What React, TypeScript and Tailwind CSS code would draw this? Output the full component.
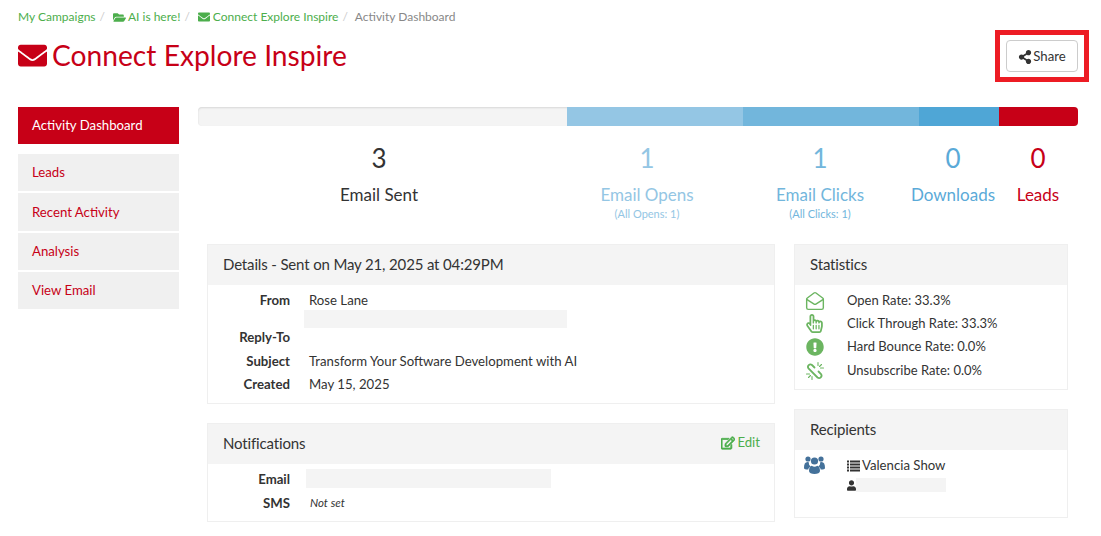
import React from "react";
import {
  FaEnvelope,
  FaExclamationCircle,
  FaFolderOpen,
  FaRegEdit,
  FaRegHandPointer,
  FaShareAlt,
  FaUser,
} from "react-icons/fa";
import { MailOpen } from "lucide-react";

const sideLinks = [
  { label: "Leads", h: "h-[37px]" },
  { label: "Recent Activity", h: "h-[38px] pt-px" },
  { label: "Analysis", h: "h-[37px]" },
  { label: "View Email", h: "h-[37px]" },
];

const BrokenLinkIcon = () => (
  <svg width="20" height="20" viewBox="0 0 20 20" fill="none" stroke="currentColor" strokeWidth="1.800" strokeLinecap="round">
    <path d="M9.500 6.500 7 4a2.500 2.500 0 0 0-3.500 3.500L12.500 16.500a2.500 2.500 0 0 0 3.500-3.500L13.500 10.500" />
    <path d="M13 1.500v3M16.500 3.500l-2 2M18.500 7h-3" strokeWidth="1.100" />
    <path d="M7 18.500v-3M3.500 16.500l2-2M1.500 13h3" strokeWidth="1.100" />
  </svg>
);

const stats = [
  { icon: <MailOpen size={20} strokeWidth={1.7} />, text: "Open Rate: 33.3%" },
  { icon: <FaRegHandPointer size={19} />, text: "Click Through Rate: 33.3%" },
  { icon: <FaExclamationCircle size={18} />, text: "Hard Bounce Rate: 0.0%" },
  { icon: <BrokenLinkIcon />, text: "Unsubscribe Rate: 0.0%" },
];

const UsersIcon = () => (
  <svg width="21" height="19" viewBox="0 0 21 19" fill="currentColor">
    <circle cx="4" cy="4" r="2.600" />
    <circle cx="17" cy="4" r="2.600" />
    <circle cx="10.500" cy="6" r="3.600" />
    <path d="M0 13c0-4 1-6 3.600-6 .6 0 1 .3 1.400.6-.4 1.600.3 3 1.600 3.800C5 12.300 4.400 13.500 4.300 14.500 1.500 14.500 0 14 0 13z" />
    <path d="M21 13c0-4-1-6-3.600-6-.6 0-1 .3-1.400.6.4 1.600-.3 3-1.600 3.800 1.600.9 2.200 2.100 2.300 3.100 2.800 0 4.300-.5 4.300-1.500z" />
    <path d="M5 16c0-3 1-5 2.800-5.200 1.500 1.200 3.900 1.200 5.400 0C15 11 16 13 16 16c0 2-2.500 3-5.500 3S5 18 5 16z" />
  </svg>
);

const ListIcon = () => (
  <svg width="13" height="12" viewBox="0 0 13 12" fill="currentColor">
    <rect x="0" y="0.500" width="2" height="2" />
    <rect x="0" y="3.500" width="2" height="2" />
    <rect x="0" y="6.500" width="2" height="2" />
    <rect x="0" y="9.500" width="2" height="2" />
    <rect x="3" y="0.500" width="10" height="2" />
    <rect x="3" y="3.500" width="10" height="2" />
    <rect x="3" y="6.500" width="10" height="2" />
    <rect x="3" y="9.500" width="10" height="2" />
  </svg>
);

const Counter = ({
  value,
  label,
  sub,
  color,
  width,
}: {
  value: string;
  label: string;
  sub?: string;
  color: string;
  width: string;
}) => (
  <div className={`${width} ${color} shrink-0 text-center`}>
    <div className="text-[26px] leading-[30px]">{value}</div>
    <div className="mt-[11px] text-[17px] leading-[21px]">{label}</div>
    {sub && <div className="mt-px text-[11px] leading-[16px]">{sub}</div>}
  </div>
);

const PanelHead = ({ title, children }: { title: string; children?: React.ReactNode }) => (
  <div className="flex h-[40px] items-center justify-between bg-[#f4f4f4] px-[15px] pb-[2px] text-[15px] tracking-[-0.15px] text-[#333]">
    <span>{title}</span>
    {children}
  </div>
);

const Row = ({ label, children }: { label: string; children?: React.ReactNode }) => (
  <div className="flex">
    <div className="w-[82px] shrink-0 text-right font-bold text-[#333]">{label}</div>
    <div className="ml-[18px] min-w-0 flex-1">{children}</div>
  </div>
);

const Slash = () => <span className="ml-[4px] mr-[8px] text-[#ccc]">/</span>;

export default function App() {
  return (
    <div className="h-[536px] w-[1101px] overflow-hidden bg-white px-[18px] font-['Lato',sans-serif] text-[13.200px] text-[#333]">
      {/* Breadcrumb */}
      <div className="flex h-[34px] items-center text-[12px] text-[#4cae4c]">
        <span>My Campaigns</span>
        <Slash />
        <FaFolderOpen className="mr-[2px] text-[13px]" />
        <span>AI is here!</span>
        <Slash />
        <FaEnvelope className="mr-[3px] text-[12px]" />
        <span>Connect Explore Inspire</span>
        <Slash />
        <span className="-ml-px text-[#888]">Activity Dashboard</span>
      </div>

      {/* Title */}
      <div className="relative flex h-[73px] items-start justify-between">
        <h1 className="mt-[2px] flex items-center text-[28.200px] leading-[38px] text-[#c70017]">
          <FaEnvelope className="mr-[5px] text-[29px]" />
          Connect Explore Inspire
        </h1>
        <div className="absolute right-[-6px] top-[-4px] flex h-[52px] w-[94px] items-center justify-center border-[5px] border-[#ed1c24]">
          <button className="flex h-[32px] w-[72px] items-center justify-center rounded-[4px] border border-[#ccc] bg-white pt-[2px] text-[#333]">
            <FaShareAlt className="mr-px text-[14px]" />
            Share
          </button>
        </div>
      </div>

      <div className="flex">
        {/* Sidebar */}
        <div className="w-[161px] shrink-0">
          <div className="mb-[10px] flex h-[37px] items-center bg-[#c70017] px-[14px] text-white">Activity Dashboard</div>
          <div className="flex flex-col gap-[2px]">
            {sideLinks.map((link) => (
              <div key={link.label} className={`flex ${link.h} items-center bg-[#f0f0f0] px-[14px] text-[#c70017]`}>
                {link.label}
              </div>
            ))}
          </div>
        </div>

        {/* Main */}
        <div className="ml-[19px] w-[880px] shrink-0">
          <div className="flex h-[19px] w-[880px] overflow-hidden rounded-[4px] bg-[#f4f4f4] shadow-[inset_0_1px_2px_rgba(0,0,0,0.12)]">
            <div className="w-[369px]" />
            <div className="w-[176px] bg-[#94c6e4]" />
            <div className="w-[176px] bg-[#72b6dc]" />
            <div className="w-[80px] bg-[#4fa6d6]" />
            <div className="w-[79px] bg-[#c70017]" />
          </div>

          <div className="mt-[17px] flex h-[101px]">
            <Counter value="3" label="Email Sent" color="text-[#333]" width="w-[362px]" />
            <Counter value="1" label="Email Opens" sub="(All Opens: 1)" color="text-[#94c6e4]" width="w-[174px]" />
            <Counter value="1" label="Email Clicks" sub="(All Clicks: 1)" color="text-[#72b6dc]" width="w-[172px]" />
            <Counter value="0" label="Downloads" color="text-[#5aaad8]" width="w-[94px]" />
            <Counter value="0" label="Leads" color="text-[#c70017]" width="w-[76px]" />
          </div>

          <div className="ml-[9px] flex gap-[19px]">
            <div className="w-[568px] shrink-0">
              <div className="h-[160px] border border-[#efefef]">
                <PanelHead title="Details - Sent on May 21, 2025 at 04:29PM" />
                <div className="flex flex-col pt-[5px] leading-[20px]">
                  <Row label="From">
                    <div className="ml-[1px]">Rose Lane</div>
                    <div className="-ml-[4px] h-[18px] w-[263px] bg-[#f4f4f4]" />
                  </Row>
                  <div className="-mt-px">
                    <Row label="Reply-To" />
                  </div>
                  <div className="mt-[4px]">
                    <Row label="Subject">
                      <div className="ml-[1px]">Transform Your Software Development with AI</div>
                    </Row>
                  </div>
                  <div className="mt-[3px]">
                    <Row label="Created">
                      <div className="ml-[1px]">May 15, 2025</div>
                    </Row>
                  </div>
                </div>
              </div>

              <div className="mt-[19px] h-[99px] border border-[#efefef]">
                <PanelHead title="Notifications">
                  <span className="-mr-px flex items-center text-[13.200px] tracking-normal text-[#4cae4c]">
                    <FaRegEdit className="mr-[2px] text-[14px]" stroke="currentColor" strokeWidth={30} />
                    Edit
                  </span>
                </PanelHead>
                <div className="flex flex-col pt-[5px] leading-[20px]">
                  <Row label="Email">
                    <div className="-ml-[2px] h-[19px] w-[245px] bg-[#f4f4f4]" />
                  </Row>
                  <div className="mt-[4px]">
                    <Row label="SMS">
                      <div className="ml-[2px] text-[11.500px] italic">Not set</div>
                    </Row>
                  </div>
                </div>
              </div>
            </div>

            <div className="w-[274px] shrink-0">
              <div className="h-[146px] border border-[#efefef]">
                <PanelHead title="Statistics" />
                <div className="flex flex-col pt-[4px]">
                  {stats.map((s) => (
                    <div key={s.text} className="flex h-[23.300px] items-center text-[13px]">
                      <span className="flex w-[52px] justify-center pr-[15px] pl-[2px] text-[#6cb561]">{s.icon}</span>
                      <span>{s.text}</span>
                    </div>
                  ))}
                </div>
              </div>

              <div className="mt-[19px] h-[109px] border border-[#efefef]">
                <PanelHead title="Recipients" />
                <div className="flex pt-[7px]">
                  <div className="-mt-[2px] flex w-[52px] justify-center pr-[15px] pl-[2px] text-[#44719a]">
                    <UsersIcon />
                  </div>
                  <div>
                    <div className="flex h-[18px] items-center">
                      <span className="mr-[2px]"><ListIcon /></span>
                      Valencia Show
                    </div>
                    <div className="mt-[3px] flex h-[14px] items-center">
                      <FaUser className="w-[9px] text-[11px]" />
                      <div className="h-[14px] w-[90px] bg-[#f4f4f4]" />
                    </div>
                  </div>
                </div>
              </div>
            </div>
          </div>
        </div>
      </div>
    </div>
  );
}
